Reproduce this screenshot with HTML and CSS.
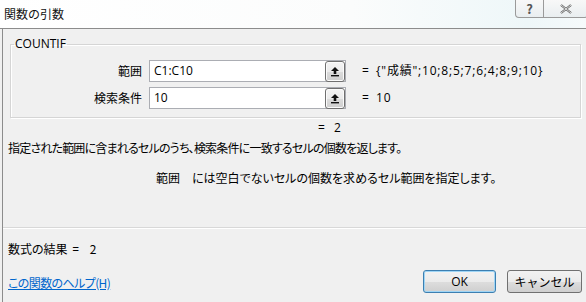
FILE: index.html
```html
<!DOCTYPE html>
<html lang="ja">
<head>
    <meta charset="UTF-8">
    <title>関数の引数</title>
    <link rel="stylesheet" href="styles.css">
</head>
<body>

<div class="window">
    <div class="titlebar">
        <span class="title">関数の引数</span>
        <div class="caption-buttons">
            <span class="cap-btn help">?</span>
            <span class="cap-btn close">
                <svg width="12" height="10" viewBox="0 0 12 10">
                    <path d="M1 1 L11 9 M11 1 L1 9" stroke="#555" stroke-width="2.2" fill="none"/>
                    <path d="M1 1 L11 9 M11 1 L1 9" stroke="#fff" stroke-width="0.8" fill="none"/>
                </svg>
            </span>
        </div>
    </div>

    <div class="dialog-body">
        <fieldset class="args">
            <legend>COUNTIF</legend>
            <div class="arg-row">
                <label>範囲</label>
                <div class="ref-input">
                    <span class="ref-text">C1:C10</span>
                    <span class="ref-btn">
                        <svg width="10" height="11" viewBox="0 0 10 11">
                            <path d="M5 1 L9 5 L6.3 5 L6.3 8 L3.7 8 L3.7 5 L1 5 Z" fill="#111"/>
                            <rect x="1" y="9" width="8" height="1.4" fill="#111"/>
                        </svg>
                    </span>
                </div>
                <span class="eq">=</span>
                <span class="arg-value">{"成績";10;8;5;7;6;4;8;9;10}</span>
            </div>
            <div class="arg-row">
                <label>検索条件</label>
                <div class="ref-input">
                    <span class="ref-text">10</span>
                    <span class="ref-btn">
                        <svg width="10" height="11" viewBox="0 0 10 11">
                            <path d="M5 1 L9 5 L6.3 5 L6.3 8 L3.7 8 L3.7 5 L1 5 Z" fill="#111"/>
                            <rect x="1" y="9" width="8" height="1.4" fill="#111"/>
                        </svg>
                    </span>
                </div>
                <span class="eq">=</span>
                <span class="arg-value">10</span>
            </div>
        </fieldset>

        <div class="func-result"><span class="eq">=</span>2</div>
        <p class="func-desc">指定された範囲に含まれるセルのうち、検索条件に一致するセルの個数を返します。</p>
        <p class="arg-desc"><span class="arg-name">範囲</span>には空白でないセルの個数を求めるセル範囲を指定します。</p>

        <div class="separator"></div>

        <div class="formula-result">数式の結果 <span class="eq">=</span> 2</div>

        <div class="footer">
            <a href="#" class="help-link">この関数のヘルプ(H)</a>
            <div class="buttons">
                <button class="btn default">OK</button>
                <button class="btn cancel">キャンセル</button>
            </div>
        </div>
    </div>
</div>

</body>
</html>
```

FILE: styles.css
```css
body {
    margin: 0;
    font-family: "Noto Sans CJK JP", "Noto Sans", sans-serif;
    font-size: 12px;
    line-height: 16px;
    font-feature-settings: "palt";
    color: #000;
}
.window {
    width: 586px;
    height: 302px;
    display: flex;
    flex-direction: column;
    background: #f0f0f0;
    overflow: hidden;
}
.titlebar {
    height: 28px;
    flex: none;
    display: flex;
    justify-content: space-between;
    align-items: flex-start;
    background: linear-gradient(90deg, #ffffff 0%, #fbfcfc 60%, #eef7f9 90%, #f6fafb 100%);
    border-bottom: 1px solid #8c8c8c;
}
.title {
    padding: 6px 0 0 4px;
    font-size: 12px;
    color: #111;
    font-feature-settings: normal;
}
.caption-buttons {
    display: flex;
    margin-right: -2px;
}
.cap-btn {
    height: 17px;
    display: flex;
    align-items: center;
    justify-content: center;
    border: 1px solid #9a9a9a;
    border-top: none;
    background: linear-gradient(#f8f8f8, #e9eef0);
    color: #555;
}
.help {
    width: 27px;
    border-radius: 0 0 0 4px;
    font-weight: bold;
    font-size: 13px;
}
.close {
    width: 43px;
    border-left: none;
    border-radius: 0 0 4px 0;
}
.dialog-body {
    flex: 1;
    margin-left: 2px;
    border-left: 1px solid #8c8c8c;
    display: flex;
    flex-direction: column;
}
.args {
    margin: 7px 5px 0 7px;
    padding: 8px 0 8px 0;
    border: 1px solid #d5d5d5;
    box-shadow: inset 1px 1px 0 #fff, 1px 1px 0 #fff;
    display: flex;
    flex-direction: column;
    gap: 5px;
}
.args legend {
    margin-left: 3px;
    padding: 0 1px;
    font-family: "Open Sans", "Noto Sans CJK JP", sans-serif;
}
.arg-row {
    display: grid;
    grid-template-columns: 131px 197px 16px 1fr;
    column-gap: 7px;
    align-items: center;
}
.arg-row label {
    text-align: right;
    font-feature-settings: normal;
}
.ref-input {
    height: 20px;
    display: flex;
    align-items: center;
    justify-content: space-between;
    border: 1px solid #abadb3;
    background: #fff;
}
.ref-text {
    padding-left: 4px;
    font-family: "Open Sans", sans-serif;
}
.ref-btn {
    width: 18px;
    height: 19px;
    display: flex;
    align-items: center;
    justify-content: center;
    border: 1px solid #707070;
    border-radius: 3px;
    background: linear-gradient(#f4f4f4 0%, #ebebeb 50%, #dcdcdc 51%, #cfcfcf 100%);
    box-shadow: inset 0 0 0 1px #fbfbfb;
}
.arg-row .eq {
    padding-left: 9px;
    font-family: "Open Sans", sans-serif;
}
.arg-value {
    font-family: "Open Sans", "Noto Sans CJK JP", sans-serif;
    letter-spacing: 0.8px;
}
.func-result {
    margin-top: 2px;
    padding-left: 315px;
    font-family: "Open Sans", sans-serif;
}
.func-result .eq {
    margin-right: 9px;
}
.func-desc {
    margin: 4px 0 0 5px;
    letter-spacing: -0.8px;
}
.arg-desc {
    margin: 14px 0 0 153px;
}
.arg-name {
    margin-right: 12px;
    font-feature-settings: normal;
}
.separator {
    margin-top: 41px;
    height: 1px;
    background: #d8d8d8;
    box-shadow: 0 1px 0 #fff;
}
.formula-result {
    margin: 13px 0 0 5px;
}
.formula-result .eq {
    font-family: "Open Sans", sans-serif;
    margin: 0 8px 0 2px;
}
.footer {
    margin-top: auto;
    display: flex;
    justify-content: space-between;
    align-items: center;
    padding: 0 4px 9px 5px;
}
.help-link {
    color: #0066cc;
    text-decoration: underline;
    margin-top: 3px;
    letter-spacing: -0.6px;
}
.buttons {
    display: flex;
    gap: 11px;
}
.btn {
    height: 23px;
    font-family: "Open Sans", "Noto Sans CJK JP", sans-serif;
    font-size: 12px;
    border: 1px solid #707070;
    border-radius: 3px;
    background: linear-gradient(#f2f2f2 0%, #ebebeb 50%, #dddddd 51%, #cfcfcf 100%);
    padding: 0;
}
.btn.default {
    width: 73px;
    border-color: #3c7fb1;
    box-shadow: inset 0 0 0 1px #9fd5f5;
}
.btn.cancel {
    width: 75px;
}
```
